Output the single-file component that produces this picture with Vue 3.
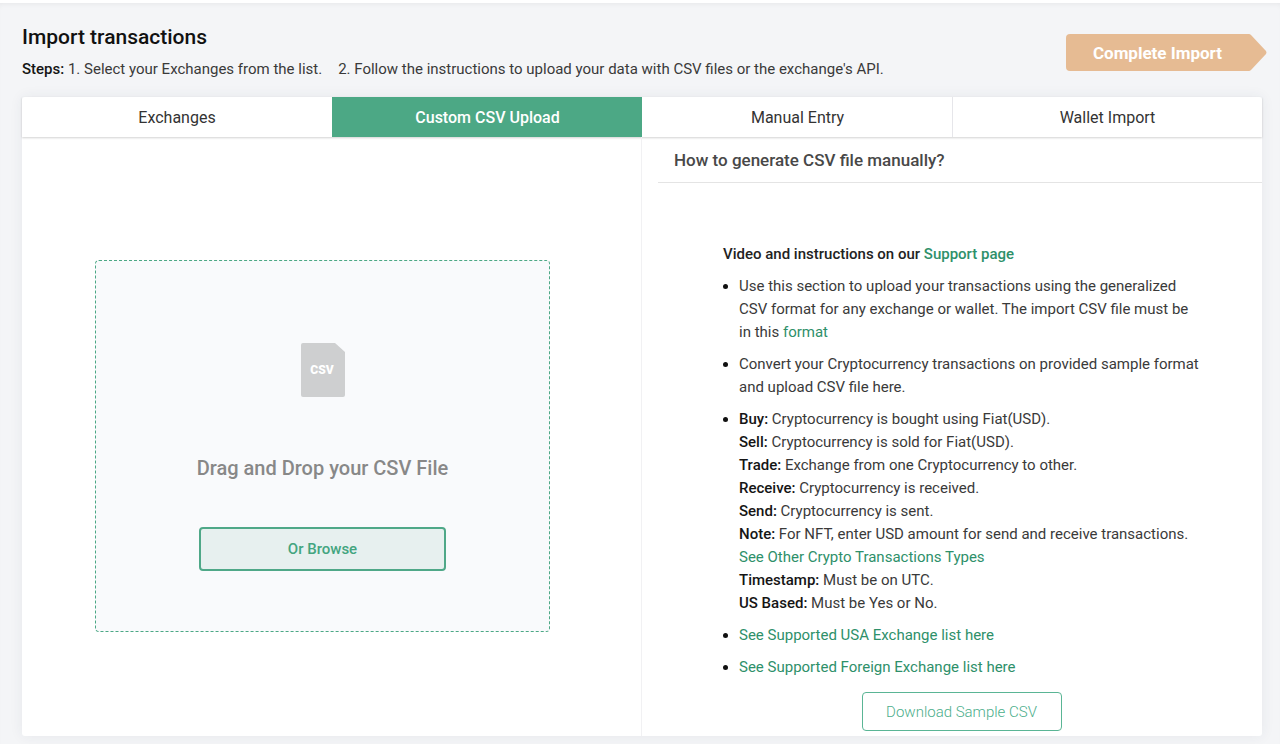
<script setup>
import { ref } from 'vue'

const tabs = ['Exchanges', 'Custom CSV Upload', 'Manual Entry', 'Wallet Import']
const active = ref('Custom CSV Upload')
</script>

<template>
  <main class="page">
    <header class="head">
      <div class="intro">
        <h1>Import transactions</h1>
        <p class="steps">
          <span><b>Steps:</b> 1. Select your Exchanges from the list.</span>
          <span>2. Follow the instructions to upload your data with CSV files or the exchange's API.</span>
        </p>
      </div>
      <button type="button" class="complete">
        <span>Complete Import</span>
        <svg class="tip" viewBox="0 0 18 37" preserveAspectRatio="none" aria-hidden="true">
          <path d="M0 0Q1 0 2 1L17 17Q18 18.500 17 20L2 36Q1 37 0 37Z" fill="#e6bb93" />
        </svg>
      </button>
    </header>

    <section class="card">
      <nav class="tabs">
        <button
          v-for="tab in tabs"
          :key="tab"
          type="button"
          class="tab"
          :class="{ active: tab === active }"
          @click="active = tab"
        >{{ tab }}</button>
      </nav>

      <div class="columns">
        <div class="upload">
          <div class="dropzone">
            <svg class="file" width="44" height="54" viewBox="0 0 44 54" role="img" aria-label="CSV file">
              <path d="M2 0H34L44 9V52Q44 54 42 54H2Q0 54 0 52V2Q0 0 2 0Z" fill="#cecfd0" />
              <text x="21" y="31" text-anchor="middle" fill="#fff" font-size="12" font-weight="900">CSV</text>
            </svg>
            <p class="drag">Drag and Drop your CSV File</p>
            <button type="button" class="browse">Or Browse</button>
          </div>
        </div>

        <div class="help">
          <h2>How to generate CSV file manually?</h2>
          <div class="guide">
            <p class="video">Video and instructions on our <a href="#">Support page</a></p>
            <ul>
              <li>
                Use this section to upload your transactions using the generalized
                CSV format for any exchange or wallet. The import CSV file must be
                in this <a href="#">format</a>
              </li>
              <li>Convert your Cryptocurrency transactions on provided sample format and upload CSV file here.</li>
              <li>
                <b>Buy:</b> Cryptocurrency is bought using Fiat(USD).<br />
                <b>Sell:</b> Cryptocurrency is sold for Fiat(USD).<br />
                <b>Trade:</b> Exchange from one Cryptocurrency to other.<br />
                <b>Receive:</b> Cryptocurrency is received.<br />
                <b>Send:</b> Cryptocurrency is sent.<br />
                <b>Note:</b> For NFT, enter USD amount for send and receive transactions.<br />
                <a href="#">See Other Crypto Transactions Types</a><br />
                <b>Timestamp:</b> Must be on UTC.<br />
                <b>US Based:</b> Must be Yes or No.
              </li>
              <li><a href="#">See Supported USA Exchange list here</a></li>
              <li><a href="#">See Supported Foreign Exchange list here</a></li>
            </ul>
            <button type="button" class="download">Download Sample CSV</button>
          </div>
        </div>
      </div>
    </section>
  </main>
</template>

<style>
body {
  background: #fff;
}
</style>

<style scoped>
* {
  box-sizing: border-box;
}

.page {
  margin-top: 3px;
  padding: 20px 18px 8px 22px;
  background: #f4f5f7;
  box-shadow: inset 0 4px 6px -4px rgba(0, 0, 0, 0.08);
  font-family: Roboto, "Liberation Sans", sans-serif;
  font-size: 16px;
  color: #3a3a3a;
}

button {
  font-family: inherit;
  cursor: pointer;
}

h1,
h2,
p,
ul {
  margin: 0;
}

a {
  color: #2e906a;
  text-decoration: none;
}

b {
  font-weight: 500;
  color: #151515;
}

.head {
  display: flex;
  justify-content: space-between;
  align-items: flex-start;
  height: 74px;
}

h1 {
  font-size: 21px;
  line-height: 28px;
  font-weight: 500;
  color: #111;
}

.steps {
  display: flex;
  gap: 16px;
  margin-top: 6px;
  font-size: 15px;
  line-height: 24px;
}

.complete {
  position: relative;
  height: 37px;
  margin: 11px 13px 0 0;
  padding: 0 27px;
  border: 0;
  border-radius: 4px 0 0 4px;
  background: #e6bb93;
  color: #fff;
  font-size: 17px;
  font-weight: 700;
}

.tip {
  position: absolute;
  top: 0;
  left: 100%;
  width: 18px;
  height: 100%;
}

.card {
  border-radius: 3px;
  background: #fff;
  box-shadow: 0 0 14px rgba(40, 50, 80, 0.07);
}

.tabs {
  display: grid;
  grid-template-columns: repeat(4, 1fr);
  height: 40px;
  box-shadow: 0 1px 2px rgba(0, 0, 0, 0.18);
}

.tab {
  border: 0;
  border-left: 1px solid #e6e6ea;
  background: none;
  color: #333;
  font-size: 16px;
}

.tab:first-child {
  border-left: 0;
}

.tab.active {
  border-color: #4ca885;
  background: #4ca885;
  color: #fff;
  font-weight: 500;
}

.tab.active + .tab {
  border-color: transparent;
}

.columns {
  display: grid;
  grid-template-columns: 1fr 1fr;
  min-height: 599px;
}

.upload {
  padding: 123px 91px 0 73px;
  border-right: 1px solid #f1f1f3;
}

.dropzone {
  display: flex;
  flex-direction: column;
  align-items: center;
  height: 372px;
  padding-top: 82px;
  border: 1px dashed #4ca885;
  border-radius: 4px;
  background: #f9fafc;
}

.drag {
  margin-top: 57px;
  font-size: 20px;
  line-height: 28px;
  font-weight: 500;
  color: #888;
}

.browse {
  width: 247px;
  height: 44px;
  margin-top: 45px;
  border: 2px solid #4fa888;
  border-radius: 4px;
  background: #e7f0ef;
  color: #43a57f;
  font-size: 15px;
  font-weight: 500;
}

.help {
  padding-left: 16px;
}

h2 {
  height: 46px;
  padding-left: 16px;
  border-bottom: 1px solid #e4e4e4;
  font-size: 17px;
  line-height: 46px;
  font-weight: 500;
  color: #484848;
}

.guide {
  padding: 60px 62px 4px 65px;
  font-size: 15px;
  line-height: 23px;
}

.video {
  margin-bottom: 9px;
  font-weight: 500;
  color: #222;
}

ul {
  padding-left: 16px;
}

li {
  margin-bottom: 9px;
}

li::marker {
  color: #111;
}

.download {
  display: block;
  width: 200px;
  height: 39px;
  margin: 13px auto 0;
  border: 1px solid #5ab595;
  border-radius: 4px;
  background: #fff;
  color: #4cae8b;
  font-size: 15px;
  font-weight: 300;
}
</style>
